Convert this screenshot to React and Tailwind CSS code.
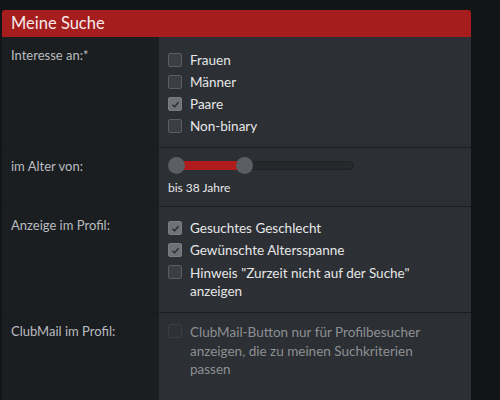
const Check = ({ checked, disabled, children }) => (
  <div className="flex items-start gap-[8px]">
    <span
      className={
        "mt-[1px] flex h-[14px] w-[14px] shrink-0 items-center justify-center rounded-[2px] border " +
        (disabled
          ? "border-[#3a3d41] bg-[#2e3135]"
          : checked
          ? "border-[#7a7d81] bg-[#6f7276]"
          : "border-[#5a5d61] bg-[#3b3e42]")
      }
    >
      {checked ? (
        <svg viewBox="0 0 12 12" className="h-[9px] w-[9px]">
          <path d="M2 6.5 L4.8 9 L10 3" fill="none" stroke="#2a2c2f" strokeWidth="1.8" />
        </svg>
      ) : null}
    </span>
    <span className={disabled ? "text-[#8d9094]" : "text-[#e6e7e8]"}>{children}</span>
  </div>
);

const Row = ({ label, children, className }) => (
  <div className="flex border-b border-[#1a1c1f]">
    <div className="w-[157px] shrink-0 bg-[#1b1e21] pl-[9px] pt-[9px] text-[13px] leading-[18px] text-[#b9bcbf]">
      {label}
    </div>
    <div className={"flex-1 bg-[#2c2f33] pl-[9px] " + className}>{children}</div>
  </div>
);

export default function App() {
  return (
    <div className="h-[400px] w-[500px] overflow-hidden bg-[#121416] pl-[2px] pt-[10px] font-['Lato',sans-serif]">
      <div className="w-[469px]">
        <div className="flex h-[27px] items-center rounded-t-[3px] bg-[#a51d1d] pl-[9px] text-[16.5px] text-[#f6eaea]">
          Meine Suche
        </div>
        <Row label="Interesse an:*" className="flex h-[110px] flex-col gap-[6px] pt-[15px] text-[13.5px] leading-[16px]">
          <Check>Frauen</Check>
          <Check>Männer</Check>
          <Check checked>Paare</Check>
          <Check>Non-binary</Check>
        </Row>
        <Row label="im Alter von:" className="h-[58px] pt-[9px]">
          <div className="relative h-[17px] w-[186px]">
            <div className="absolute left-0 right-0 top-[4px] h-[9px] rounded-full border border-[#202225] bg-[#26292c]" />
            <div className="absolute left-[8px] top-[4px] h-[9px] w-[68px] bg-[#b01b1b]" />
            <div className="absolute left-0 top-0 h-[17px] w-[17px] rounded-full bg-[#5b5e62]" />
            <div className="absolute left-[68px] top-0 h-[17px] w-[17px] rounded-full bg-[#5b5e62]" />
          </div>
          <div className="mt-[5px] text-[12px] text-[#e6e7e8]">bis 38 Jahre</div>
        </Row>
        <Row label="Anzeige im Profil:" className="flex h-[105px] flex-col gap-[6px] pt-[13px] text-[13.5px] leading-[16px]">
          <Check checked>Gesuchtes Geschlecht</Check>
          <Check checked>Gewünschte Altersspanne</Check>
          <Check>
            <span className="leading-[18px]">
              Hinweis "Zurzeit nicht auf der Suche"
              <br />
              anzeigen
            </span>
          </Check>
        </Row>
        <Row label="ClubMail im Profil:" className="h-[120px] pt-[10px] text-[13.5px] leading-[18.5px]">
          <Check disabled>
            ClubMail-Button nur für Profilbesucher
            <br />
            anzeigen, die zu meinen Suchkriterien
            <br />
            passen
          </Check>
        </Row>
      </div>
    </div>
  );
}
